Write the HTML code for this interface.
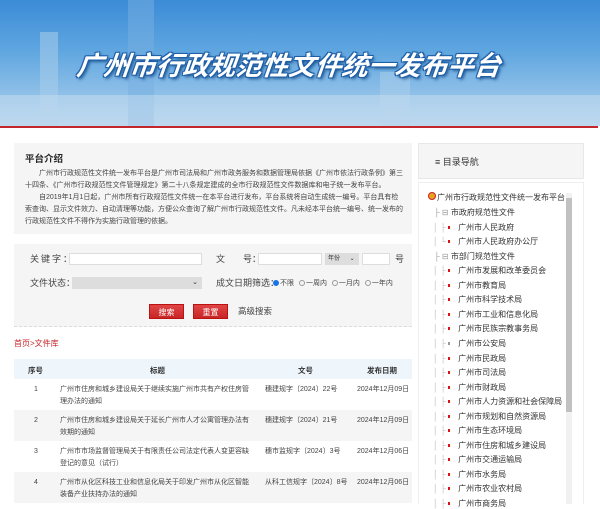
<!DOCTYPE html>
<html><head><meta charset="utf-8"><style>
*{margin:0;padding:0;box-sizing:border-box}
body{width:600px;height:504px;overflow:hidden;background:#fff;font-family:"Liberation Sans","Noto Sans CJK SC",sans-serif;color:#333;position:relative}
.a{position:absolute;white-space:nowrap}
.banner{position:absolute;left:0;top:0;width:600px;height:126px;background:linear-gradient(180deg,#3b8bd6 0%,#5fa6e0 40%,#8fc0e8 75%,#b4d4ee 100%);overflow:hidden}
.bld{position:absolute;background:rgba(170,205,235,.55)}
.title{position:absolute;left:77px;top:44px;font-size:26.5px;font-weight:bold;font-style:italic;color:#fff;letter-spacing:0;transform:skewX(-6deg);text-shadow:0 0 2px #1f5fa8,1px 1px 0 #1f5fa8,-1px -1px 0 #1f5fa8,1px -1px 0 #1f5fa8,-1px 1px 0 #1f5fa8,2px 2px 3px #134a86;white-space:nowrap}
.red{position:absolute;left:0;top:126px;width:598px;height:2px;background:#c4272b}
.box{position:absolute;background:#f5f5f5}
.p{font-size:7px;line-height:12px;color:#444}
input,.sel{position:absolute;background:#fff;border:1px solid #ddd}
.btn{position:absolute;background:linear-gradient(#e04545,#c72626);color:#fff;font-size:8px;text-align:center;line-height:15px;border:1px solid #b11}
.lbl{font-size:9px;color:#444}
.rad{display:inline-block;width:6px;height:6px;border-radius:50%;border:1px solid #999;vertical-align:middle;margin:0 1px 0 3px}
.t{font-size:7px;color:#444;line-height:12px}
.tr{position:absolute;left:14px;width:398px;height:31px}
.nav{font-size:8px;color:#333}
.dot{display:inline-block;width:2px;height:3px;background:#d11;margin-right:8px;vertical-align:middle}
</style></head><body>
<div class="banner">
 <div class="bld" style="left:40px;top:32px;width:18px;height:94px"></div>
 <div class="bld" style="left:128px;top:0;width:26px;height:126px;background:rgba(120,175,225,.5)"></div>
 <div class="bld" style="left:380px;top:72px;width:30px;height:54px"></div>
 <div class="bld" style="left:0;top:95px;width:600px;height:31px;background:rgba(200,222,240,.5)"></div>
 <div class="title">广州市行政规范性文件统一发布平台</div>
</div>
<div class="red"></div>

<div class="box" style="left:14px;top:143px;width:398px;height:91px"></div>
<div class="a" style="left:25px;top:151px;font-size:9.5px;font-weight:bold;color:#222">平台介绍</div>
<div class="a p" style="left:25px;top:168px;width:378px;white-space:normal">
<div style="text-indent:14px">广州市行政规范性文件统一发布平台是广州市司法局和广州市政务服务和数据管理局依据《广州市依法行政条例》第三十四条、《广州市行政规范性文件管理规定》第二十八条规定建成的全市行政规范性文件数据库和电子统一发布平台。</div>
<div style="text-indent:14px">自2019年1月1日起，广州市所有行政规范性文件统一在本平台进行发布，平台系统将自动生成统一编号。平台具有检索查询、显示文件效力、自动清理等功能，方便公众查询了解广州市行政规范性文件。凡未经本平台统一编号、统一发布的行政规范性文件不得作为实施行政管理的依据。</div>
</div>

<div class="box" style="left:14px;top:244px;width:398px;height:83px;border-bottom:1px dashed #ddd"></div>
<div class="a lbl" style="left:30px;top:252px;letter-spacing:2px">关键字：</div>
<input style="left:69px;top:253px;width:133px;height:12px">
<div class="a lbl" style="left:216px;top:252px">文</div>
<div class="a lbl" style="left:243px;top:252px">号：</div>
<input style="left:258px;top:253px;width:64px;height:12px">
<div class="sel" style="left:325px;top:253px;width:34px;height:12px;background:#ddd;border-color:#ddd;font-size:6px;line-height:10px;padding-left:2px">年份 <span style="margin-left:8px">⌄</span></div>
<input style="left:362px;top:253px;width:28px;height:12px">
<div class="a lbl" style="left:395px;top:252px">号</div>
<div class="a lbl" style="left:30px;top:276px">文件状态：</div>
<div class="sel" style="left:72px;top:277px;width:130px;height:12px;background:#ddd;border-color:#ddd;font-size:7px;line-height:10px;text-align:right;padding-right:3px">⌄</div>
<div class="a lbl" style="left:216px;top:276px">成文日期筛选：</div>
<div class="a" style="left:273px;top:278px;font-size:7px;color:#444"><span class="rad" style="background:#1a73e8;border-color:#1a73e8;margin-left:0"></span>不限 <span class="rad"></span>一周内 <span class="rad"></span>一月内 <span class="rad"></span>一年内</div>
<div class="btn" style="left:149px;top:304px;width:35px;height:15px">搜索</div>
<div class="btn" style="left:193px;top:304px;width:35px;height:15px">重置</div>
<div class="a" style="left:238px;top:305px;font-size:8.5px;color:#444">高级搜索</div>

<div class="a" style="left:14px;top:338px;font-size:8px;color:#c4272b">首页&gt;文件库</div>

<div class="tr" style="top:359px;height:20px;background:#eef5fb"></div>
<div class="a" style="left:28px;top:365px;font-size:7.5px;font-weight:bold">序号</div>
<div class="a" style="left:150px;top:365px;font-size:7.5px;font-weight:bold">标题</div>
<div class="a" style="left:298px;top:365px;font-size:7.5px;font-weight:bold">文号</div>
<div class="a" style="left:367px;top:365px;font-size:7.5px;font-weight:bold">发布日期</div>

<div class="tr" style="top:410px;background:#f5f5f5"></div>
<div class="tr" style="top:472px;background:#f5f5f5"></div>

<div class="a t" style="left:34px;top:384px">1</div>
<div class="a t" style="left:60px;top:384px;width:192px;white-space:normal">广州市住房和城乡建设局关于继续实施广州市共有产权住房管理办法的通知</div>
<div class="a t" style="left:265px;top:384px">穗建规字〔2024〕22号</div>
<div class="a t" style="left:357px;top:384px">2024年12月09日</div>

<div class="a t" style="left:34px;top:415px">2</div>
<div class="a t" style="left:60px;top:415px;width:192px;white-space:normal">广州市住房和城乡建设局关于延长广州市人才公寓管理办法有效期的通知</div>
<div class="a t" style="left:265px;top:415px">穗建规字〔2024〕21号</div>
<div class="a t" style="left:357px;top:415px">2024年12月09日</div>

<div class="a t" style="left:34px;top:446px">3</div>
<div class="a t" style="left:60px;top:446px;width:192px;white-space:normal">广州市市场监督管理局关于有限责任公司法定代表人变更容缺登记的意见（试行）</div>
<div class="a t" style="left:265px;top:446px">穗市监规字〔2024〕3号</div>
<div class="a t" style="left:357px;top:446px">2024年12月06日</div>

<div class="a t" style="left:34px;top:477px">4</div>
<div class="a t" style="left:60px;top:477px;width:192px;white-space:normal">广州市从化区科技工业和信息化局关于印发广州市从化区智能装备产业扶持办法的通知</div>
<div class="a t" style="left:265px;top:477px">从科工信规字〔2024〕8号</div>
<div class="a t" style="left:357px;top:477px">2024年12月06日</div>

<div class="box" style="left:418px;top:143px;width:166px;height:36px;border:1px solid #e8e8e8"></div>
<div class="a" style="left:435px;top:155px;font-size:9px;color:#333">≡ 目录导航</div>
<div class="a" style="left:418px;top:182px;width:166px;height:322px;border:1px solid #eee;border-bottom:none"></div>
<div class="a" style="left:566px;top:193px;width:6px;height:311px;background:#f1f1f1"></div>
<div class="a" style="left:566px;top:198px;width:6px;height:214px;background:#c1c1c1"></div>

<div class="a" style="left:428px;top:192px;width:8px;height:8px;border-radius:50%;background:#e8a21c;border:1px solid #c22"></div>
<div class="a nav" style="left:437px;top:192px">广州市行政规范性文件统一发布平台</div>
<div class="a nav" style="left:434px;top:207px;color:#999">├ ⊟ <span style="color:#333">市政府规范性文件</span></div>
<div class="a nav" style="left:433px;top:222px;color:#bbb">│ ├ <span class="dot"></span><span style="color:#333">广州市人民政府</span></div>
<div class="a nav" style="left:433px;top:236px;color:#bbb">│ └ <span class="dot"></span><span style="color:#333">广州市人民政府办公厅</span></div>
<div class="a nav" style="left:434px;top:251px;color:#999">├ ⊟ <span style="color:#333">市部门规范性文件</span></div>
<div class="a nav" style="left:433px;top:265px;color:#bbb">│ ├ <span class="dot"></span><span style="color:#333">广州市发展和改革委员会</span></div>
<div class="a nav" style="left:433px;top:280px;color:#bbb">│ ├ <span class="dot"></span><span style="color:#333">广州市教育局</span></div>
<div class="a nav" style="left:433px;top:294px;color:#bbb">│ ├ <span class="dot"></span><span style="color:#333">广州市科学技术局</span></div>
<div class="a nav" style="left:433px;top:309px;color:#bbb">│ ├ <span class="dot"></span><span style="color:#333">广州市工业和信息化局</span></div>
<div class="a nav" style="left:433px;top:323px;color:#bbb">│ ├ <span class="dot"></span><span style="color:#333">广州市民族宗教事务局</span></div>
<div class="a nav" style="left:433px;top:338px;color:#bbb">│ ├ <span class="dot" style="background:#999"></span><span style="color:#333">广州市公安局</span></div>
<div class="a nav" style="left:433px;top:353px;color:#bbb">│ ├ <span class="dot"></span><span style="color:#333">广州市民政局</span></div>
<div class="a nav" style="left:433px;top:367px;color:#bbb">│ ├ <span class="dot"></span><span style="color:#333">广州市司法局</span></div>
<div class="a nav" style="left:433px;top:382px;color:#bbb">│ ├ <span class="dot"></span><span style="color:#333">广州市财政局</span></div>
<div class="a nav" style="left:433px;top:396px;color:#bbb">│ ├ <span class="dot"></span><span style="color:#333">广州市人力资源和社会保障局</span></div>
<div class="a nav" style="left:433px;top:411px;color:#bbb">│ ├ <span class="dot"></span><span style="color:#333">广州市规划和自然资源局</span></div>
<div class="a nav" style="left:433px;top:425px;color:#bbb">│ ├ <span class="dot"></span><span style="color:#333">广州市生态环境局</span></div>
<div class="a nav" style="left:433px;top:440px;color:#bbb">│ ├ <span class="dot"></span><span style="color:#333">广州市住房和城乡建设局</span></div>
<div class="a nav" style="left:433px;top:454px;color:#bbb">│ ├ <span class="dot"></span><span style="color:#333">广州市交通运输局</span></div>
<div class="a nav" style="left:433px;top:469px;color:#bbb">│ ├ <span class="dot"></span><span style="color:#333">广州市水务局</span></div>
<div class="a nav" style="left:433px;top:483px;color:#bbb">│ ├ <span class="dot"></span><span style="color:#333">广州市农业农村局</span></div>
<div class="a nav" style="left:433px;top:498px;color:#bbb">│ ├ <span class="dot"></span><span style="color:#333">广州市商务局</span></div>
</body></html>
